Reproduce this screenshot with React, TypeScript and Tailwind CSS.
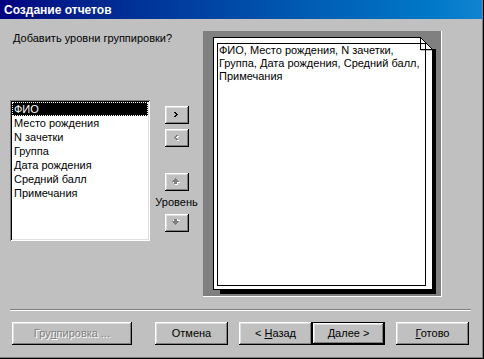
import React from 'react';

const raised =
  'shadow-[inset_-1px_-1px_#000,inset_1px_1px_#fff,inset_-2px_-2px_#808080,inset_2px_2px_#dfdfdf]';

const FIELDS = ['ФИО', 'Место рождения', 'N зачетки', 'Группа', 'Дата рождения', 'Средний балл', 'Примечания'];

// маленькая стрелка ">" / "<"
const Chevron = ({ dir, disabled }: { dir: 'left' | 'right'; disabled?: boolean }) => {
  const d = dir === 'right'
    ? 'M0 0h2v1h1v1h1v1h-1v1h-1v1h-2v-1h1v-1h1v-1h-1v-1h-1z'
    : 'M4 0h-2v1h-1v1h-1v1h1v1h1v1h2v-1h-1v-1h-1v-1h1v-1h1z';
  return (
    <svg width="6" height="7" viewBox="0 0 6 7" shapeRendering="crispEdges">
      {disabled && <path d={d} fill="#fff" transform="translate(1 1)" />}
      <path d={d} fill={disabled ? '#808080' : '#000'} />
    </svg>
  );
};

// блочная стрелка вверх/вниз (неактивная)
const BlockArrow = ({ dir }: { dir: 'up' | 'down' }) => {
  const d = 'M3 0h1v1h1v1h1v1h1v1h-2v2h-3v-2h-2v-1h1v-1h1v-1h1z';
  const t = dir === 'down' ? 'translate(0 6) scale(1 -1)' : '';
  return (
    <svg width="9" height="8" viewBox="0 0 9 8" shapeRendering="crispEdges">
      <g transform={t}>
        <path d={d} fill="#fff" transform="translate(1 1)" />
        <path d={d} fill="#808080" />
      </g>
    </svg>
  );
};

const Btn = ({ children, w, def, disabled }: { children: React.ReactNode; w: string; def?: boolean; disabled?: boolean }) => (
  <div className={`${w} h-[23px] ${def ? 'border border-black' : ''}`}>
    <div
      className={`w-full h-full flex items-center justify-center ${raised} ${
        disabled ? 'text-[#808080] [text-shadow:1px_1px_0_#fff]' : ''
      }`}
    >
      {children}
    </div>
  </div>
);

export default function App() {
  return (
    <div className="w-[484px] h-[359px] bg-[#c0c0c0] flex flex-col text-[11px] text-black font-['Liberation_Sans',Arial,sans-serif] shadow-[inset_-1px_-1px_#000,inset_-2px_-2px_#808080]">
      <div className="h-[19px] mr-[2px] bg-linear-to-r from-[#000080] to-[#1084d0] flex items-center pl-[4px] text-white font-bold text-[12px]">
        Создание отчетов
      </div>

      <div className="flex pl-[10px] pt-[12px] h-[278px]">
        <div className="w-[140px] flex flex-col">
          <div className="ml-[3px] mt-[1px] leading-[13px] whitespace-nowrap">Добавить уровни группировки?</div>
          <div className="mt-[55px] h-[141px] bg-white p-[2px] shadow-[inset_1px_1px_#808080,inset_-1px_-1px_#fff,inset_2px_2px_#000,inset_-2px_-2px_#dfdfdf]">
            {FIELDS.map((f, i) => (
              <div
                key={f}
                className={`h-[14px] leading-[14px] px-[2px] ${
                  i === 0 ? 'bg-black text-white outline outline-1 outline-dotted outline-white -outline-offset-1' : ''
                }`}
              >
                {f}
              </div>
            ))}
          </div>
        </div>

        <div className="w-[53px] flex flex-col items-center pt-[75px]">
          <div className={`w-[24px] h-[18px] flex items-center justify-center ${raised}`}>
            <Chevron dir="right" />
          </div>
          <div className={`mt-[5px] w-[24px] h-[18px] flex items-center justify-center ${raised}`}>
            <Chevron dir="left" disabled />
          </div>
          <div className={`mt-[26px] w-[24px] h-[18px] flex items-center justify-center ${raised}`}>
            <BlockArrow dir="up" />
          </div>
          <div className="h-[23px] flex items-center">Уровень</div>
          <div className={`w-[24px] h-[18px] flex items-center justify-center ${raised}`}>
            <BlockArrow dir="down" />
          </div>
        </div>

        <div className="w-[239px] h-[266px] bg-[#808080] border-r border-b border-white pl-[10px] pt-[6px]">
          <div className="relative w-[223px] h-[257px]">
            <svg className="absolute inset-0" width="223" height="257" viewBox="0 0 223 257" shapeRendering="crispEdges">
              <rect x="7" y="12" width="216" height="245" fill="#000" />
              <path d="M0.5 0.5H207.5L219.5 12.5V252.5H0.5Z" fill="#fff" stroke="#000" />
              <path d="M207.5 0.5V12.5H219.5" fill="none" stroke="#000" />
              <path d="M208 13H219V14H208Z" fill="#c0c0c0" />
              <rect x="4.5" y="6.5" width="208" height="242" fill="none" stroke="#000" />
            </svg>
            <div className="relative pl-[6px] pt-[7px] pr-[12px] leading-[13px]">
              ФИО, Место рождения, N зачетки, Группа, Дата рождения, Средний балл, Примечания
            </div>
          </div>
        </div>
      </div>

      <div className="mt-[12px] ml-[10px] mr-[13px] border-t border-[#808080] border-b border-b-white" />

      <div className="mt-[11px] flex pl-[12px]">
        <Btn w="w-[120px]" disabled>
          <span>
            Гру<u>п</u>пировка ...
          </span>
        </Btn>
        <div className="ml-[23px]">
          <Btn w="w-[73px]">Отмена</Btn>
        </div>
        <div className="ml-[11px]">
          <Btn w="w-[73px]">
            <span>
              &lt; <u>Н</u>азад
            </span>
          </Btn>
        </div>
        <Btn w="w-[73px]" def>
          <span>
            <u>Д</u>алее &gt;
          </span>
        </Btn>
        <div className="ml-[11px]">
          <Btn w="w-[73px]">
            <span>
              <u>Г</u>отово
            </span>
          </Btn>
        </div>
      </div>
    </div>
  );
}
